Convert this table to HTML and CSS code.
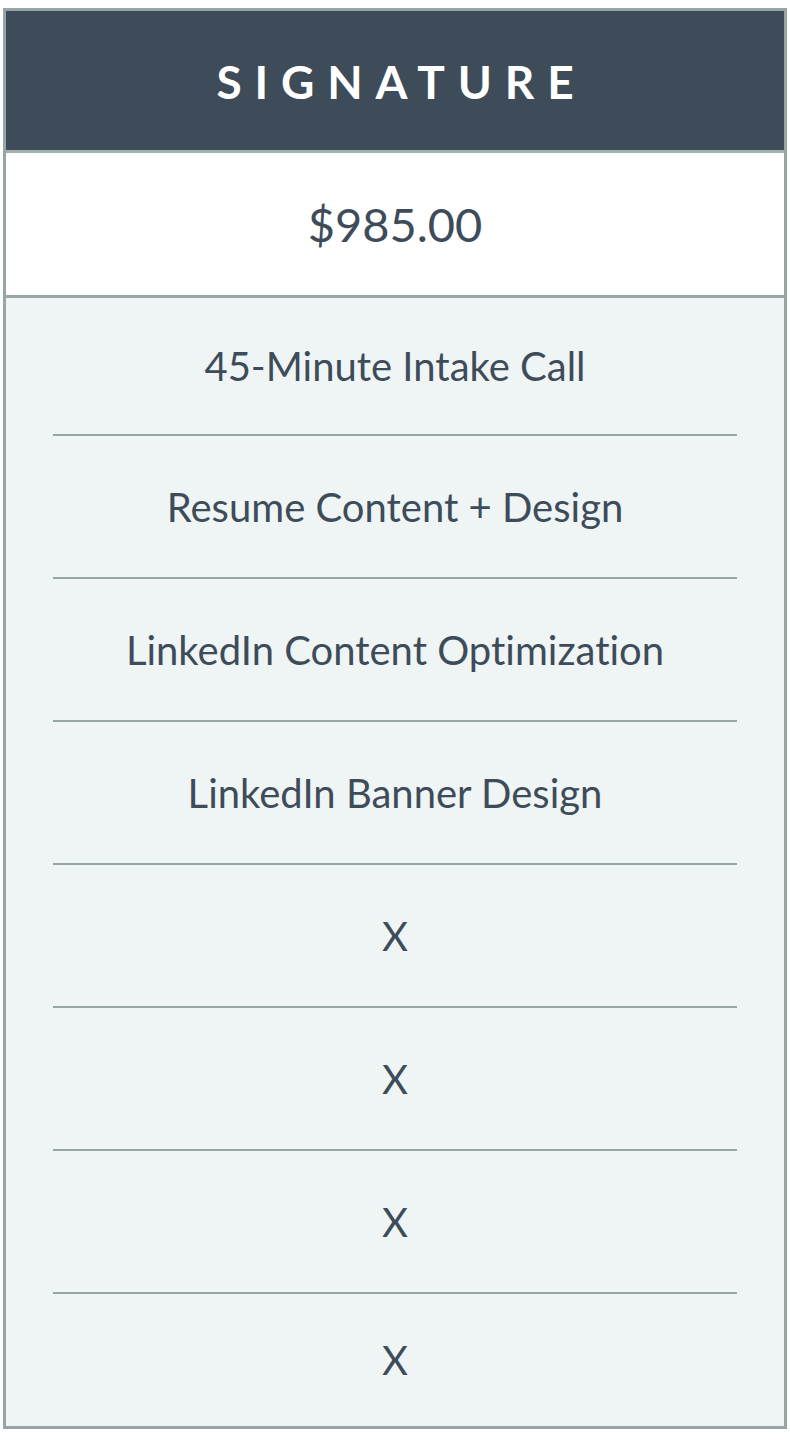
FILE: index.html
```html
<!DOCTYPE html>
<html>
<head>
<meta charset="utf-8">
<link rel="stylesheet" href="styles.css">
</head>
<body>
<div class="page">
  <div class="card">
    <div class="header">SIGNATURE</div>
    <div class="price">$985.00</div>
    <div class="rows">
      <div class="row">45-Minute Intake Call</div>
      <div class="row">Resume Content + Design</div>
      <div class="row">LinkedIn Content Optimization</div>
      <div class="row">LinkedIn Banner Design</div>
      <div class="row">X</div>
      <div class="row">X</div>
      <div class="row">X</div>
      <div class="row">X</div>
    </div>
  </div>
</div>
</body>
</html>
```

FILE: styles.css
```css
html, body {
  margin: 0;
  padding: 0;
  background: #ffffff;
}
.page {
  padding: 8px 3px 0 3px;
  font-family: Lato, "Open Sans", sans-serif;
  color: #3e4c5a;
  font-variant-ligatures: no-common-ligatures;
  font-feature-settings: "liga" 0;
}
.card {
  width: 784px;
  box-sizing: border-box;
  border: 3px solid #97a5a5;
}
.header {
  height: 142px;
  box-sizing: border-box;
  background: #3e4c5a;
  color: #ffffff;
  display: flex;
  align-items: center;
  justify-content: center;
  font-size: 46px;
  font-weight: 700;
  letter-spacing: 0.28em;
  padding-left: 0.28em;
  padding-top: 2px;
  border-bottom: 3px solid #a3b0b0;
}
.price {
  height: 142px;
  background: #ffffff;
  display: flex;
  align-items: center;
  justify-content: center;
  font-size: 47px;
  border-bottom: 3px solid #97a5a5;
}
.rows {
  background: #eff5f5;
  padding: 0 47px;
}
.row {
  height: 141px;
  display: flex;
  align-items: center;
  justify-content: center;
  font-size: 40px;
  border-bottom: 2px solid #97a5a5;
}
.row:first-child {
  height: 136px;
}
.row:last-child {
  height: 132px;
  border-bottom: none;
}
```
